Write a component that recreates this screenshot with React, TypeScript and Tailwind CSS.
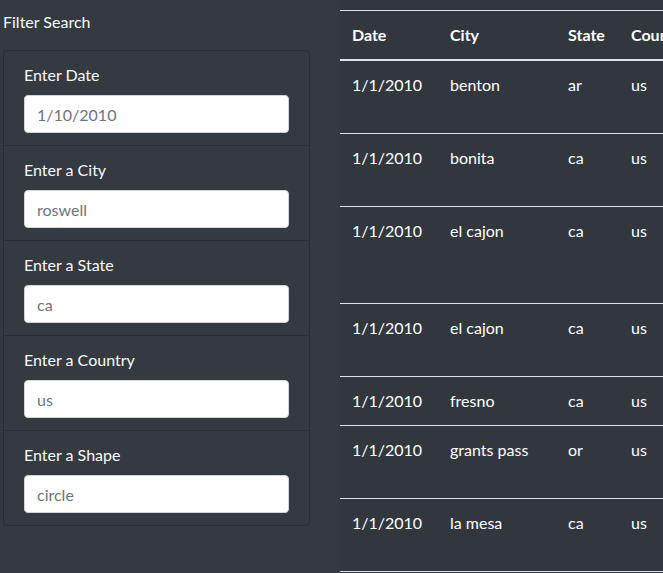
import React from "react";

const filters = [
  { label: "Enter Date", placeholder: "1/10/2010" },
  { label: "Enter a City", placeholder: "roswell" },
  { label: "Enter a State", placeholder: "ca" },
  { label: "Enter a Country", placeholder: "us" },
  { label: "Enter a Shape", placeholder: "circle" },
];

// extra height mimics wrapped comment text in columns that sit off-screen
const rows = [
  { date: "1/1/2010", city: "benton", state: "ar", country: "us", h: "min-h-[48px]" },
  { date: "1/1/2010", city: "bonita", state: "ca", country: "us", h: "min-h-[48px]" },
  { date: "1/1/2010", city: "el cajon", state: "ca", country: "us", h: "min-h-[72px]" },
  { date: "1/1/2010", city: "el cajon", state: "ca", country: "us", h: "min-h-[48px]" },
  { date: "1/1/2010", city: "fresno", state: "ca", country: "us", h: "min-h-[24px]" },
  { date: "1/1/2010", city: "grants pass", state: "or", country: "us", h: "min-h-[48px]" },
  { date: "1/1/2010", city: "la mesa", state: "ca", country: "us", h: "min-h-[48px]" },
];

export default function App() {
  return (
    <div
      className="flex h-[573px] w-[663px] overflow-hidden bg-[#353a41] text-[16px] leading-6 text-[#f8f9fa]"
      style={{ fontFamily: "'Segoe UI', Lato, 'Liberation Sans', sans-serif" }}
    >
      {/* Filters */}
      <div className="w-[340px] shrink-0">
        <div className="px-[3px] pt-[10px]">Filter Search</div>
        <div className="ml-[3px] mt-[16px] w-[307px] rounded border border-[#2a2e34]">
          {filters.map((f, i) => (
            <div
              key={f.label}
              className={`px-5 py-3 ${i > 0 ? "border-t border-[#2a2e34]" : ""}`}
            >
              <label className="mb-2 block">{f.label}</label>
              <input
                type="text"
                placeholder={f.placeholder}
                className="block h-[38px] w-full rounded border border-[#ced4da] bg-white px-3 text-[16px] text-[#495057] outline-none placeholder:text-[#6c757d]"
              />
            </div>
          ))}
        </div>
      </div>

      {/* Results */}
      <div className="flex-1 overflow-hidden bg-[#32373e] pt-[10px]">
        <table className="w-[700px] table-fixed border-collapse text-left text-white">
          <thead>
            <tr className="border-t border-[#dee2e6]">
              <th className="w-[98px] border-b-2 border-[#dee2e6] p-3 font-bold">Date</th>
              <th className="w-[118px] border-b-2 border-[#dee2e6] p-3 font-bold">City</th>
              <th className="w-[63px] border-b-2 border-[#dee2e6] p-3 font-bold">State</th>
              <th className="border-b-2 border-[#dee2e6] p-3 font-bold">Country</th>
            </tr>
          </thead>
          <tbody>
            {rows.map((r, i) => (
              <tr key={i} className="border-b border-[#dee2e6] align-top">
                <td className="p-3">
                  <div className={r.h}>{r.date}</div>
                </td>
                <td className="p-3">{r.city}</td>
                <td className="p-3">{r.state}</td>
                <td className="p-3">{r.country}</td>
              </tr>
            ))}
          </tbody>
        </table>
      </div>
    </div>
  );
}
